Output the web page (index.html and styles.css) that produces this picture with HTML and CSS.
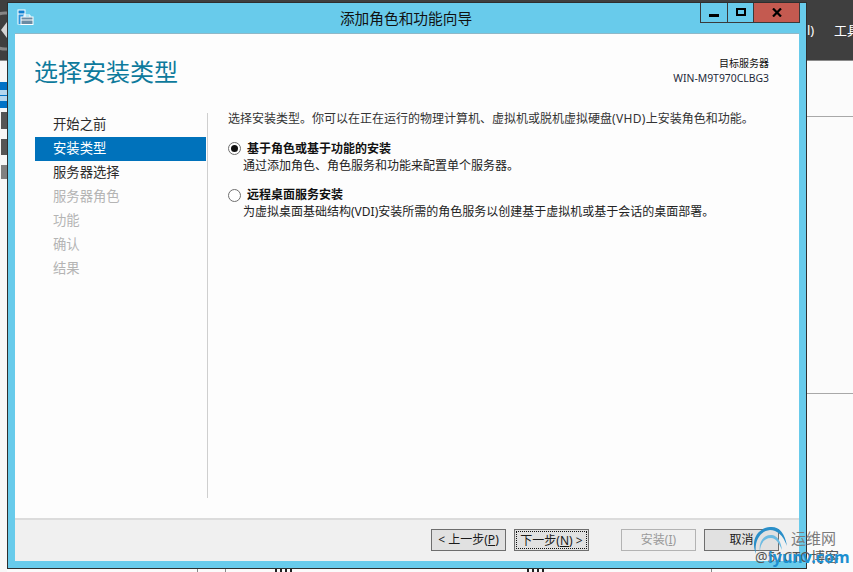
FILE: index.html
```html
<!DOCTYPE html>
<html lang="zh">
<head>
<meta charset="utf-8">
<title>添加角色和功能向导</title>
<link rel="stylesheet" href="styles.css">
</head>
<body>
<div class="desktop">
  <div class="bg-top">
    <svg class="bg-back" width="7" height="60" viewBox="0 0 7 60"><circle cx="5" cy="31" r="18" fill="none" stroke="#858585" stroke-width="3"/><path d="M1 30 L7 22 V38Z" fill="#d4d4d4"/></svg>
    <span class="bg-menu">l)</span>
    <span class="bg-menu bg-tools">工具</span>
  </div>
  <div class="bg-side">
    <div class="bg-side-sel"><i></i></div>
    <div class="bg-side-ico one"></div>
    <div class="bg-side-ico two"></div>
    <div class="bg-side-ico three"></div>
  </div>
  <div class="bg-line l1"></div>
  <div class="bg-line l2"></div>
  <div class="bg-foot f1"></div>
  <div class="bg-foot f2"></div>
  <div class="bg-foot f3"></div>
  <div class="bg-bits b1"></div>
  <div class="bg-bits b2"></div>

  <div class="window">
    <div class="titlebar">
      <svg class="app-icon" width="17" height="17" viewBox="0 0 17 17">
        <rect x="0.5" y="0.5" width="8" height="15" fill="#fff"/>
        <rect x="1.5" y="1.5" width="6" height="3" fill="#0e7ed0"/>
        <rect x="1.5" y="5.5" width="6" height="9.5" fill="#2b93dc"/>
        <rect x="4" y="8" width="12" height="7.5" fill="#6b8ba3" stroke="#fff"/>
        <path d="M7 8V6h6v2" fill="none" stroke="#fff"/>
        <path d="M4 11h12" stroke="#fff"/>
      </svg>
      <div class="title">添加角色和功能向导</div>
      <div class="controls">
        <div class="ctl ctl-min"><span class="glyph-min"></span></div>
        <div class="ctl ctl-max"><span class="glyph-max"></span></div>
        <div class="ctl ctl-close">
          <svg width="10" height="9" viewBox="0 0 10 9"><path d="M1 0.5 L9 8.5 M9 0.5 L1 8.5" stroke="#000" stroke-width="2.2"/></svg>
        </div>
      </div>
    </div>
    <div class="client">
      <div class="main">
        <header class="head">
          <h1 class="heading">选择安装类型</h1>
          <div class="target">
            <div class="target-label">目标服务器</div>
            <div>WIN-M9T970CLBG3</div>
          </div>
        </header>
        <div class="body">
          <nav class="nav">
            <div class="nav-item">开始之前</div>
            <div class="nav-item active">安装类型</div>
            <div class="nav-item">服务器选择</div>
            <div class="nav-item off">服务器角色</div>
            <div class="nav-item off">功能</div>
            <div class="nav-item off">确认</div>
            <div class="nav-item off">结果</div>
          </nav>
          <section class="content">
            <p class="intro">选择安装类型。你可以在正在运行的物理计算机、虚拟机或脱机虚拟硬盘<span class="latin">(VHD)</span>上安装角色和功能。</p>
            <div class="option first">
              <span class="radio checked"></span>
              <div>
                <div class="opt-title">基于角色或基于功能的安装</div>
                <div class="opt-desc">通过添加角色、角色服务和功能来配置单个服务器。</div>
              </div>
            </div>
            <div class="option second">
              <span class="radio"></span>
              <div>
                <div class="opt-title">远程桌面服务安装</div>
                <div class="opt-desc">为虚拟桌面基础结构(VDI)安装所需的角色服务以创建基于虚拟机或基于会话的桌面部署。</div>
              </div>
            </div>
          </section>
        </div>
      </div>
      <footer class="footer">
        <div class="btn">&lt; 上一步(<u>P</u>)</div>
        <div class="btn focus"><span>下一步(<u>N</u>) &gt;</span></div>
        <div class="btn disabled gap">安装(<u>I</u>)</div>
        <div class="btn">取消</div>
      </footer>
    </div>
  </div>

  <div class="mark">
    <svg class="mark-swirl" width="42" height="44" viewBox="0 0 42 44">
      <path d="M6 32 C0 18 8 6 20 5 C29 4 35 11 37 24 C33 13 27 8 20 8 C10 9 4 19 6 32Z" fill="#2a8fc9"/>
      <path d="M10 30 C8 20 14 12 22 13 C28 14 31 20 32 28 C29 21 26 16 21 16 C14 16 10 22 10 30Z" fill="#6dbbe2"/>
    </svg>
    <span class="mark-cn">运维网</span>
    <span class="mark-sub">@51CTO博客</span>
    <span class="mark-url">iyunv.com</span>
  </div>
</div>
</body>
</html>
```
FILE: styles.css
```css
* { box-sizing: border-box; }
html, body { margin: 0; padding: 0; }
body { font-family: "Noto Sans", "Noto Sans CJK SC", sans-serif; color: #1e1e1e; }
.desktop { position: relative; width: 853px; height: 572px; overflow: hidden; background: #fbfbfb; }

.bg-top { position: absolute; left: 0; top: 0; width: 853px; height: 61px; background: #3f3f3f; border-bottom: 1px solid #8a8a8a; }
.bg-back { position: absolute; left: 0; top: 0; }
.bg-menu { position: absolute; left: 807px; top: 21px; font-size: 13px; line-height: 18px; color: #fff; }
.bg-tools { left: 834px; width: 19px; white-space: nowrap; overflow: hidden; }
.bg-side { position: absolute; left: 0; top: 61px; width: 7px; height: 511px; background: #f7f7f7; }
.bg-side-sel { position: absolute; left: 0; top: 21px; width: 7px; height: 26px; background: #0072c6; }
.bg-side-sel i { display: block; position: absolute; left: 0; top: 8px; width: 7px; height: 11px; background: linear-gradient(#b5d6ee 0 5px, #0072c6 5px 6px, #b5d6ee 6px); }
.bg-side-ico { position: absolute; left: 1px; width: 6px; background: #555; }
.bg-side-ico.one { top: 51px; height: 17px; }
.bg-side-ico.two { top: 78px; height: 16px; }
.bg-side-ico.three { top: 104px; height: 14px; background: #808080; }
.bg-line { position: absolute; left: 807px; width: 46px; height: 1px; background: #a8a8a8; }
.bg-line.l1 { top: 116px; }
.bg-line.l2 { top: 393px; }
.bg-foot { position: absolute; top: 569px; width: 1px; height: 3px; background: #888; }
.f1 { left: 197px; }
.f2 { left: 225px; }
.f3 { left: 711px; }
.bg-bits { position: absolute; top: 569px; width: 20px; height: 3px; background: repeating-linear-gradient(90deg, #222 0 2px, transparent 2px 5px); }
.b1 { left: 275px; }
.b2 { left: 527px; }

.window { position: absolute; left: 7px; top: 2px; width: 800px; height: 567px; border: 1px solid #2e2e2e; background: #68cbeb; display: flex; flex-direction: column; padding: 0 7px 7px 7px; }
.titlebar { height: 30px; position: relative; flex: none; display: flex; align-items: flex-start; justify-content: center; }
.app-icon { position: absolute; left: 2px; top: 6px; }
.title { font-size: 14.7px; line-height: 20px; margin-top: 5px; color: #111; padding-right: 2px; }
.controls { position: absolute; right: -1px; top: 0; display: flex; height: 20px; border: 1px solid #3a3a3a; border-top: 0; }
.ctl { display: flex; align-items: center; justify-content: center; height: 100%; }
.ctl-min { width: 27px; border-right: 1px solid #3a3a3a; }
.ctl-max { width: 26px; border-right: 1px solid #3a3a3a; }
.ctl-close { width: 45px; background: #c45a50; }
.glyph-min { display: block; width: 10px; height: 3px; background: #000; margin-top: 5px; }
.glyph-max { display: block; width: 10px; height: 8px; border: 2px solid #000; margin-top: -1px; }

.client { flex: 1; background: #fdfdfd; display: flex; flex-direction: column; border-top: 1px solid #8fb8c8; }
.main { flex: 1; display: flex; flex-direction: column; min-height: 0; padding: 0 0 20px 20px; }
.head { display: flex; justify-content: space-between; align-items: flex-start; height: 79px; padding: 21px 30px 0 0; flex: none; }
.heading { margin: 0 0 0 -1px; font-weight: 400; font-size: 24px; line-height: 34px; color: #0d7a9c; }
.target { font-size: 10.4px; line-height: 15px; text-align: right; color: #1e2a3a; margin-top: 1px; }
.target-label { font-size: 10px; color: #111; }
.body { flex: 1; display: flex; min-height: 0; }
.nav { width: 173px; flex: none; border-right: 1px solid #cfcfcf; display: flex; flex-direction: column; }
.nav-item { width: 171px; height: 24px; font-size: 13.33px; line-height: 22px; padding-left: 18px; color: #2c2c2c; }
.nav-item.active { background: #0072bb; color: #fff; }
.nav-item.off { color: #b4b4b4; }
.content { flex: 1; padding: 0 0 0 20px; font-size: 12px; line-height: 16px; }
.intro { margin: -2px 0 0; color: #333; white-space: nowrap; }
.latin { letter-spacing: 0.35px; }
.option { display: flex; gap: 6px; align-items: flex-start; position: relative; }
.first { margin-top: 13px; }
.second { margin-top: 12px; }
.radio { flex: none; width: 13px; height: 13px; border-radius: 50%; border: 1px solid #6f6f6f; background: #fff; margin: 2px 0 0; position: relative; }
.second .radio { margin-top: 3px; }
.radio.checked::after { content: ""; position: absolute; left: 2px; top: 2px; width: 7px; height: 7px; border-radius: 50%; background: #111; }
.opt-title { font-weight: 700; color: #111; line-height: 17px; }
.opt-desc { margin-left: -4px; color: #222; line-height: 17px; white-space: nowrap; }

.footer { flex: none; height: 43px; background: #f0f0f0; border-top: 2px solid #dcdcdc; display: flex; align-items: flex-start; padding: 9px 0 0 416px; gap: 8px; }
.btn { width: 75px; height: 22px; border: 1px solid #6e6e6e; background: #e1e1e1; font-size: 12px; line-height: 20px; text-align: center; color: #1a1a1a; white-space: nowrap; }
.btn.focus { padding: 1px; }
.btn.focus span { display: block; height: 18px; line-height: 18px; border: 1px dotted #111; }
.btn.disabled { background: #efefef; border-color: #b3b3b3; color: #9a9a9a; }
.gap { margin-left: 24px; }

.mark { position: absolute; left: 750px; top: 522px; width: 103px; height: 50px; }
.mark-swirl { position: absolute; left: 0; top: 0; }
.mark-cn { position: absolute; left: 41px; top: 5px; font-size: 15px; line-height: 22px; color: #7b7b7b; white-space: nowrap; }
.mark-sub { position: absolute; left: 5px; top: 25px; font-size: 14px; line-height: 20px; color: #555; white-space: nowrap; }
.mark-url { position: absolute; left: 18px; top: 25px; font-size: 16px; line-height: 20px; font-weight: 700; color: #1d8fd0; white-space: nowrap; }
```
